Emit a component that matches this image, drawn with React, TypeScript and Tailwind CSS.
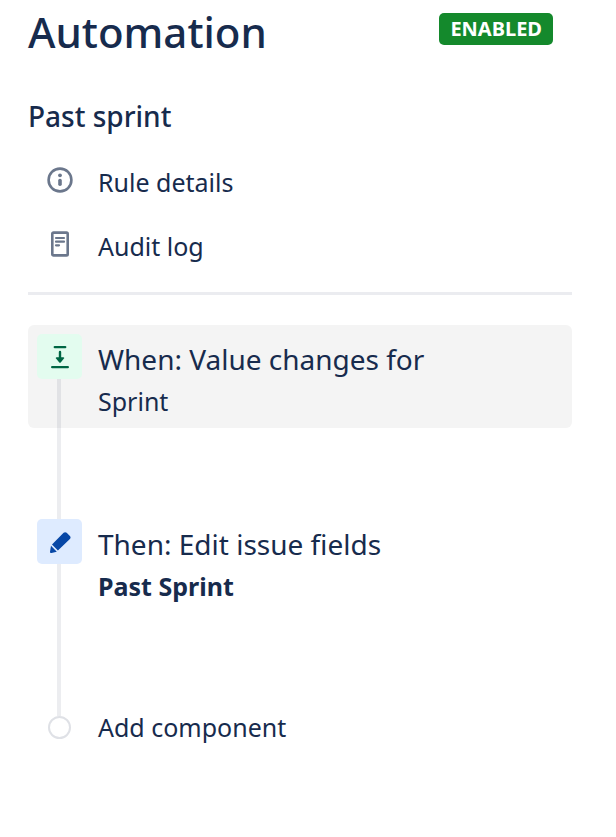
import type { ReactNode } from 'react';
import clsx from 'clsx';

function InfoIcon() {
  return (
    <svg width="26" height="26" viewBox="0 0 26 26" fill="none" aria-hidden="true">
      <circle cx="13" cy="13" r="11.4" stroke="#6B778C" strokeWidth="2.6" />
      <circle cx="13" cy="8.3" r="1.9" fill="#6B778C" />
      <rect x="11.2" y="11.7" width="3.6" height="7.2" rx="1.7" fill="#6B778C" />
    </svg>
  );
}

function LogIcon() {
  return (
    <svg width="26" height="26" viewBox="0 0 26 26" fill="none" aria-hidden="true">
      <rect x="5.3" y="1.6" width="15.4" height="22.8" rx="1.2" stroke="#6B778C" strokeWidth="2.6" />
      <path d="M9 7h8M9 10.7h8M9 14.3h3" stroke="#6B778C" strokeWidth="2.2" strokeLinecap="round" />
    </svg>
  );
}

function ValueChangeIcon() {
  return (
    <svg width="45" height="45" viewBox="0 0 45 45" fill="none" aria-hidden="true">
      <path d="M17.8 13.1h10.4M15.2 33.1h15.6" stroke="#006644" strokeWidth="2.4" strokeLinecap="round" />
      <path d="M23 18v8" stroke="#006644" strokeWidth="2.4" strokeLinecap="round" />
      <path d="M19.6 23.2h6.8c.8 0 1.1.8.6 1.4l-3.3 3.8c-.4.4-1 .4-1.4 0L19 24.6c-.5-.6-.2-1.4.6-1.4z" fill="#006644" />
    </svg>
  );
}

function EditIcon() {
  return (
    <svg width="45" height="45" viewBox="0 0 45 45" fill="#0747A6" aria-hidden="true">
      <path d="M26.6 13.8c.9-.9 2.2-.9 3.1 0l3.2 3.2c.9.9.9 2.1 0 3L20.9 31.6l-5.9-6.1z" />
      <path d="M14 26.8l5.8 5.9-5.3 1.3c-.9.2-1.6-.5-1.5-1.3z" />
    </svg>
  );
}

const links = [
  { label: 'Rule details', icon: <InfoIcon /> },
  { label: 'Audit log', icon: <LogIcon /> },
];

type StepProps = {
  title: string;
  detail: string;
  icon: ReactNode;
  tile: string;
  selected?: boolean;
  boldDetail?: boolean;
};

function Step({ title, detail, icon, tile, selected, boldDetail }: StepProps) {
  return (
    <li className="relative pb-[82px]">
      <button
        type="button"
        className={clsx('flex w-full gap-4 rounded-md p-[9px] text-left', selected && 'bg-[#F4F4F4]')}
      >
        <span className={clsx('relative size-[45px] shrink-0 rounded-[5px]', tile)}>{icon}</span>
        <span className="pt-[5px] pb-0.5">
          <span className="block text-[28px] leading-10">{title}</span>
          <span className={clsx('mt-1.5 block text-[25px] leading-8', boldDetail && 'font-bold')}>{detail}</span>
        </span>
      </button>
      {/* connector down to the next step, its end tucked under the next tile */}
      <span className="absolute top-[54px] -bottom-[21px] left-[29px] w-1 bg-[#091E42]/8" />
    </li>
  );
}

export default function App() {
  return (
    <div className="min-h-screen bg-white pt-2 pr-11 pb-8 pl-7 font-['Noto_Sans','Open_Sans',sans-serif] text-[#172B4D]">
      <header className="flex items-start justify-between pr-[19px]">
        <h1 className="text-[42px] leading-12 font-medium">Automation</h1>
        <span className="mt-[5px] rounded-[5px] bg-[#14892C] px-[11px] text-[20px] leading-8 font-bold text-white">
          ENABLED
        </span>
      </header>

      <h2 className="mt-[42px] text-[28px] leading-9 font-medium">Past sprint</h2>

      <nav className="mt-8 flex flex-col items-start gap-8 pl-[19px]">
        {links.map((link) => (
          <a key={link.label} href="#" className="flex gap-[25px] text-[25px] leading-8">
            <span className="mt-px">{link.icon}</span>
            <span>{link.label}</span>
          </a>
        ))}
      </nav>

      <hr className="mt-[30px] mb-[30px] border-t-3 border-[#EBECF0]" />

      <ol>
        <Step title="When: Value changes for" detail="Sprint" icon={<ValueChangeIcon />} tile="bg-[#E3FCEF]" selected />
        <Step title="Then: Edit issue fields" detail="Past Sprint" icon={<EditIcon />} tile="bg-[#DEEBFF]" boldDetail />
        <li className="pt-4">
          <button type="button" className="flex items-center gap-[27px] pl-5 text-[25px] leading-8">
            <span className="size-[23px] rounded-full border-2 border-[#DFE1E6] bg-white" />
            <span>Add component</span>
          </button>
        </li>
      </ol>
    </div>
  );
}
